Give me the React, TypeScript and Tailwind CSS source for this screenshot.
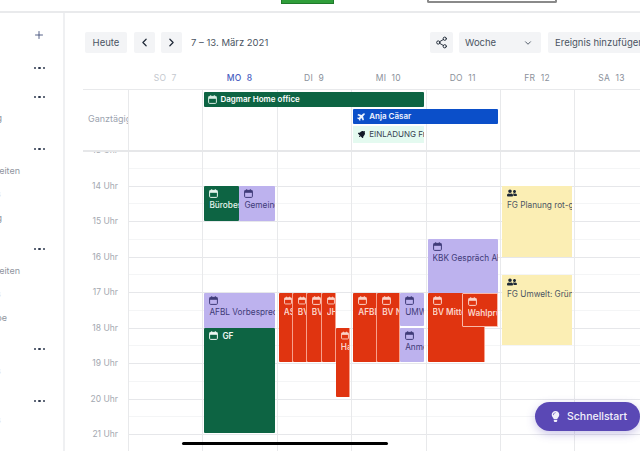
import React from "react";
import { ChevronDown, ChevronLeft, ChevronRight, Plus, Share2 } from "lucide-react";
import { FaBell, FaLightbulb, FaPlane, FaUserFriends } from "react-icons/fa";

type Kind = "green" | "lav" | "red" | "redb" | "yel";

const kindCls: Record<Kind, string> = {
  green: "bg-[#0d6443] text-[#e8f5ee] font-medium rounded-[1px]",
  lav: "bg-[#bdb2ee] text-[#3f3b78] rounded-[1px]",
  red: "bg-[#e03410] text-[#fbd3c8] font-semibold rounded-[1px] border-r border-[#f7a08c]",
  redb: "bg-[#e03410] text-[#fbd3c8] font-semibold rounded-[1px] border border-[#f9b8a8]",
  yel: "bg-[#fbeeb4] text-[#4b5563]",
};

function CalIcon({ className }: { className?: string }) {
  return (
    <svg width="9" height="9" viewBox="0 0 9 9" className={className}>
      <rect x="0.6" y="1.4" width="7.8" height="7" rx="1" fill="none" stroke="currentColor" strokeWidth="1" />
      <rect x="0.6" y="1.4" width="7.8" height="2.4" fill="currentColor" />
      <rect x="2.2" y="0.2" width="1" height="1.6" fill="currentColor" />
      <rect x="5.8" y="0.2" width="1" height="1.6" fill="currentColor" />
    </svg>
  );
}

function Ev({ kind, pos, label }: { kind: Kind; pos: string; label: string }) {
  const icon =
    kind === "yel" ? <FaUserFriends size={10} className="text-[#1f2937]" /> : <CalIcon />;
  return (
    <div className={`absolute overflow-hidden pt-[2px] pl-[5px] text-[8.25px] leading-[12px] whitespace-nowrap ${kindCls[kind]} ${pos}`}>
      <div className="h-[10px] flex items-center">{icon}</div>
      <div className="mt-[1px] overflow-hidden">{label}</div>
    </div>
  );
}

const days = [
  { t: "SO  7", c: "text-[#c4c8ce]" },
  { t: "MO  8", c: "text-[#4a5fc1] font-medium" },
  { t: "DI  9", c: "text-[#8b919b]" },
  { t: "MI  10", c: "text-[#8b919b]" },
  { t: "DO  11", c: "text-[#8b919b]" },
  { t: "FR  12", c: "text-[#8b919b]" },
  { t: "SA  13", c: "text-[#8b919b]" },
];

const hours = ["13 Uhr", "14 Uhr", "15 Uhr", "16 Uhr", "17 Uhr", "18 Uhr", "19 Uhr", "20 Uhr", "21 Uhr"];
const slots = Array.from({ length: 18 }, (_, i) => i);

function Dots({ mt }: { mt: string }) {
  return (
    <div className={`h-[16px] flex items-center justify-end gap-[2px] pr-[18px] ${mt}`}>
      <span className="w-[2.5px] h-[2.5px] rounded-full bg-[#2f3a4f]" />
      <span className="w-[2.5px] h-[2.5px] rounded-full bg-[#2f3a4f]" />
      <span className="w-[2.5px] h-[2.5px] rounded-full bg-[#2f3a4f]" />
    </div>
  );
}

function Frag({ mt, pr, text, faint }: { mt: string; pr: string; text: string; faint?: boolean }) {
  return (
    <div className={`h-[16px] flex items-center justify-end whitespace-nowrap text-[9px] ${faint ? "text-[#dfe1e5]" : "text-[#8f959e]"} ${mt} ${pr}`}>
      <span className="shrink-0">{text}</span>
    </div>
  );
}

function Column({ children }: { children?: React.ReactNode }) {
  return (
    <div className="relative w-[74.4px] shrink-0 border-l border-[#e8e9eb]">
      {slots.map((i) => (
        <div
          key={i}
          className={i % 2 === 0 ? "h-[17.75px] border-t border-[#e6e7ea]" : "h-[17.75px] border-t border-[#f4f5f6]"}
        />
      ))}
      {children}
    </div>
  );
}

export default function App() {
  return (
    <div
      className="relative w-[640px] h-[451px] overflow-hidden bg-white flex flex-col antialiased"
      style={{ fontFamily: 'Inter, "Liberation Sans", sans-serif' }}
    >
      <header className="h-[13px] shrink-0 border-b-2 border-[#e9eaec] flex items-start">
        <div className="ml-[281px] w-[53px] h-[4px] bg-[#2f9e3a] border border-t-0 border-[#1f7a2b]" />
        <div className="ml-[93px] w-[130px] h-[3px] border-2 border-t-0 border-[#8a8a8a] rounded-b-[2px]" />
      </header>

      <div className="flex flex-1 min-h-0">
        <aside className="w-[65px] shrink-0 border-r-2 border-[#eff0f2] overflow-hidden pt-[14px]">
          <div className="h-[16px] flex items-center justify-end pr-[18px] text-[#3f4c78]">
            <Plus size={12} strokeWidth={1.75} />
          </div>
          <Dots mt="mt-[17px]" />
          <Dots mt="mt-[13px]" />
          <Frag mt="mt-[5px]" pr="pr-[61px]" text="Planung" />
          <Dots mt="mt-[15px]" />
          <Frag mt="mt-[6px]" pr="pr-[43px]" text="bearbeiten" />
          <Frag mt="mt-[7px]" pr="pr-[62px]" text="s" faint />
          <Frag mt="mt-[8px]" pr="pr-[61px]" text="Planung" />
          <Dots mt="mt-[15px]" />
          <Frag mt="mt-[6px]" pr="pr-[43px]" text="bearbeiten" />
          <Frag mt="mt-[7px]" pr="pr-[62px]" text="s" faint />
          <Frag mt="mt-[8px]" pr="pr-[56px]" text="Gruppe" />
          <Dots mt="mt-[15px]" />
          <Frag mt="mt-[6px]" pr="pr-[62px]" text="s" faint />
          <Dots mt="mt-[14px]" />
          <Frag mt="mt-[3px]" pr="pr-[62px]" text="s" faint />
        </aside>

        <main className="flex-1 min-w-0 overflow-hidden pl-[18px] flex flex-col">
          <div className="mt-[19px] h-[21px] shrink-0 flex items-center text-[9.5px] text-[#4b5563]">
            <button className="ml-[2px] w-[42px] h-full bg-[#f3f4f6] rounded-[2px] pt-px">Heute</button>
            <button className="ml-[7px] w-[21px] h-full bg-[#f3f4f6] rounded-[2px] flex items-center justify-center text-[#1f2937]">
              <ChevronLeft size={13} strokeWidth={2.25} />
            </button>
            <button className="ml-[6px] w-[21px] h-full bg-[#f3f4f6] rounded-[2px] flex items-center justify-center text-[#1f2937]">
              <ChevronRight size={13} strokeWidth={2.25} />
            </button>
            <span className="ml-[9px] pt-px text-[#4b5563]">7 – 13. März 2021</span>
            <button className="ml-auto w-[23px] h-full bg-[#f3f4f6] rounded-[2px] flex items-center justify-center text-[#1f2937]">
              <Share2 size={13} strokeWidth={1.75} />
            </button>
            <button className="ml-[6px] w-[82px] h-full bg-[#f3f4f6] rounded-[2px] flex items-center justify-between pl-[6px] pr-[8px]">
              <span className="pt-px">Woche</span>
              <ChevronDown size={10} strokeWidth={2.25} />
            </button>
            <button className="ml-[7px] w-[92px] h-full pt-px bg-[#f3f4f6] rounded-l-[2px] overflow-hidden whitespace-nowrap text-left pl-[7px]">
              Ereignis hinzufügen
            </button>
          </div>

          <div className="h-[36px] shrink-0 flex pl-[45px]">
            {days.map((d) => (
              <div key={d.t} className={`w-[74.4px] shrink-0 text-center pt-[19px] text-[8.5px] leading-[12px] whitespace-pre tracking-[0.3px] ${d.c}`}>
                {d.t}
              </div>
            ))}
          </div>

          <div className="h-[61px] shrink-0 border-t border-[#e8e9eb] flex">
            <div className="w-[45px] shrink-0 pt-[23px] text-[9px] leading-[12px] text-[#9ca3af] whitespace-nowrap overflow-hidden pl-[5px]">
              Ganztägig
            </div>
            <div className="grid grid-cols-[repeat(7,74.4px)] grid-rows-[2px_15px_2px_15px_2px_17px_8px] shrink-0">
              <div className="col-start-1 row-start-1 row-span-7 border-l border-[#e8e9eb]" />
              <div className="col-start-2 row-start-1 row-span-7 border-l border-[#e8e9eb]" />
              <div className="col-start-3 row-start-1 row-span-7 border-l border-[#e8e9eb]" />
              <div className="col-start-4 row-start-1 row-span-7 border-l border-[#e8e9eb]" />
              <div className="col-start-5 row-start-1 row-span-7 border-l border-[#e8e9eb]" />
              <div className="col-start-6 row-start-1 row-span-7 border-l border-[#e8e9eb]" />
              <div className="col-start-7 row-start-1 row-span-7 border-l border-[#e8e9eb]" />
              <div className="col-start-2 col-span-3 row-start-2 ml-[2px] mr-[1.5px] bg-[#0d6443] text-white rounded-[1px] flex items-center gap-[3px] pl-[4px] pb-px text-[8px] font-semibold whitespace-nowrap">
                <CalIcon className="text-[#d7ece2]" />
                Dagmar Home office
              </div>
              <div className="col-start-4 col-span-2 row-start-4 ml-[2px] mr-[1.5px] bg-[#0b4fc9] text-[#eef3ff] rounded-[1px] flex items-center gap-[3px] pl-[4px] pb-px text-[8px] font-semibold whitespace-nowrap">
                <FaPlane size={9} className="-rotate-45" />
                Anja Cäsar
              </div>
              <div className="col-start-4 row-start-6 ml-[2px] mr-[1.5px] bg-[#e4faf0] text-[#374151] flex items-center gap-[3px] pl-[5px] pb-px text-[8px] whitespace-nowrap overflow-hidden">
                <FaBell size={8} className="shrink-0 rotate-45 text-[#111827]" />
                EINLADUNG Fraktion
              </div>
            </div>
          </div>

          <div className="relative z-10 h-[2px] -mb-[2px] shrink-0 bg-[#e6e7e9]" />

          <div className="flex-1 min-h-0 overflow-hidden flex">
            <div className="w-[45px] shrink-0">
              {hours.map((h) => (
                <div key={h} className="h-[35.5px] pr-[10px] text-right text-[8.5px] leading-[12px] text-[#a3a8b0] whitespace-nowrap">
                  <span className="block -translate-y-1/2">{h}</span>
                </div>
              ))}
            </div>
            <Column />
            <Column>
              <Ev kind="green" pos="left-[1px] top-[36px] w-[35px] h-[35px]" label="Bürobesprechung" />
              <Ev kind="lav" pos="left-[36px] top-[36px] w-[36px] h-[35px]" label="Gemeinde" />
              <Ev kind="lav" pos="left-[1px] top-[143px] w-[71px] h-[35px]" label="AFBL Vorbesprechung" />
              <div className="absolute left-[1px] top-[178px] w-[71px] h-[105px] bg-[#0d6443] text-[#eef7f2] rounded-[1px] flex items-start gap-[4px] pl-[5px] pt-[2px] text-[8.25px] leading-[12px] font-semibold">
                <CalIcon className="mt-[1px]" />
                GF
              </div>
            </Column>
            <Column>
              <Ev kind="red" pos="left-[1px] top-[143px] w-[14px] h-[69px]" label="ASF" />
              <Ev kind="red" pos="left-[15px] top-[143px] w-[14px] h-[69px]" label="BV Ost" />
              <Ev kind="red" pos="left-[29px] top-[143px] w-[15px] h-[69px]" label="BV Süd" />
              <Ev kind="red" pos="left-[44px] top-[143px] w-[14px] h-[69px]" label="JHA" />
              <Ev kind="red" pos="left-[58px] top-[178px] w-[14px] h-[69px]" label="Haupt" />
            </Column>
            <Column>
              <Ev kind="red" pos="left-[1px] top-[143px] w-[24px] h-[69px]" label="AFBL" />
              <Ev kind="red" pos="left-[25px] top-[143px] w-[23px] h-[69px]" label="BV Nord" />
              <Ev kind="lav" pos="left-[48px] top-[143px] w-[24px] h-[33px]" label="UMW" />
              <Ev kind="lav" pos="left-[48px] top-[178px] w-[24px] h-[34px]" label="Anmeldung" />
            </Column>
            <Column>
              <Ev kind="lav" pos="left-[1px] top-[89px] w-[70px] h-[54px]" label="KBK Gespräch Abstimmung" />
              <Ev kind="red" pos="left-[1px] top-[143px] w-[57px] h-[69px]" label="BV Mitte" />
              <Ev kind="redb" pos="left-[35px] top-[143px] w-[36px] h-[34px]" label="Wahlprüfung" />
            </Column>
            <Column>
              <Ev kind="yel" pos="left-[1px] top-[36px] w-[70px] h-[71px]" label="FG Planung rot-grün" />
              <Ev kind="yel" pos="left-[1px] top-[125px] w-[70px] h-[70px]" label="FG Umwelt: Grüne Stadt" />
            </Column>
            <Column />
          </div>
        </main>
      </div>

      <div className="absolute left-[535px] top-[402px] w-[105px] h-[29px] rounded-full bg-[#5a48b5] text-[#f2f0fb] flex items-center pl-[15px] gap-[6px] text-[10.5px] font-medium shadow-[0_3px_10px_rgba(90,72,181,0.3)]">
        <FaLightbulb size={11} />
        Schnellstart
      </div>
      <div className="absolute left-[182px] top-[442px] w-[206px] h-[3px] rounded-full bg-black" />
    </div>
  );
}
